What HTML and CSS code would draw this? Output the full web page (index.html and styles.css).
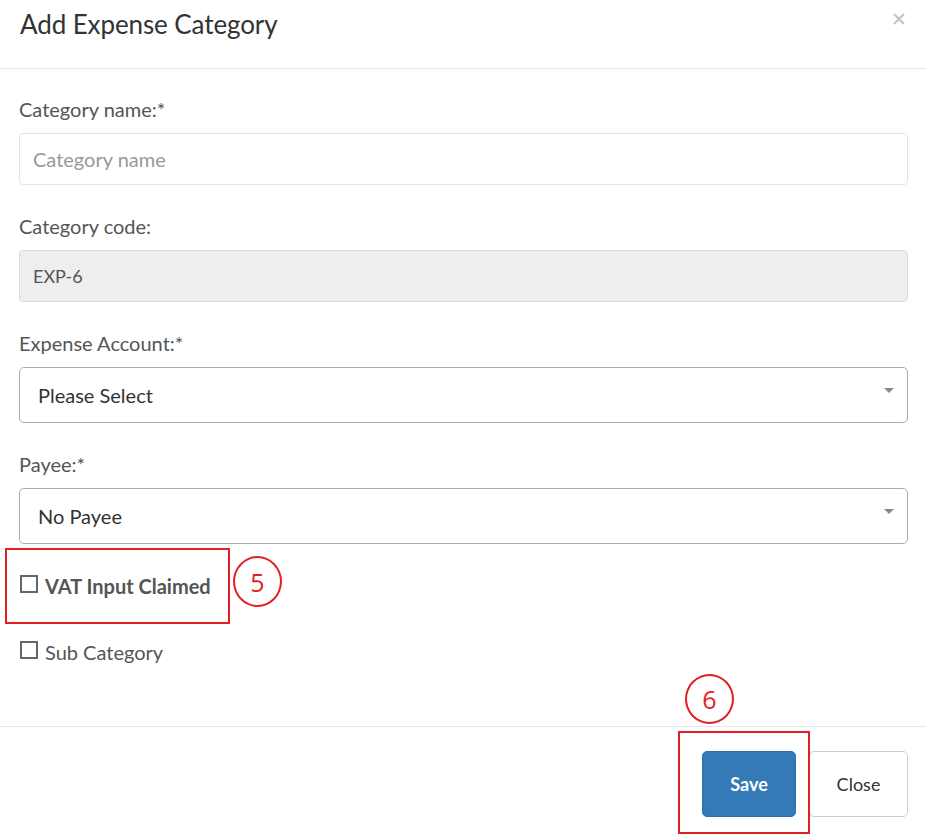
FILE: index.html
```html
<!DOCTYPE html>
<html>
<head>
<meta charset="utf-8">
<link rel="stylesheet" href="styles.css">
</head>
<body>
<div class="modal">
  <div class="modal-header">
    <h4 class="title">Add Expense Category</h4>
    <svg class="close-x" width="14" height="14" viewBox="0 0 14 14"><path d="M2 2 L12 12 M12 2 L2 12" stroke="#c4c4c4" stroke-width="2.2" fill="none"/></svg>
  </div>
  <div class="modal-body">
    <div class="group">
      <label class="label">Category name:*</label>
      <div class="input placeholder">Category name</div>
    </div>
    <div class="group">
      <label class="label">Category code:</label>
      <div class="input disabled">EXP-6</div>
    </div>
    <div class="group">
      <label class="label">Expense Account:*</label>
      <div class="select">Please Select<span class="arrow"></span></div>
    </div>
    <div class="group last">
      <label class="label">Payee:*</label>
      <div class="select">No Payee<span class="arrow"></span></div>
    </div>
    <div class="check-row vat">
      <span class="box"></span><span class="check-text bold">VAT Input Claimed</span>
      <span class="anno-box anno-vat"></span>
      <span class="anno-circle anno-5">5</span>
    </div>
    <div class="check-row sub">
      <span class="box"></span><span class="check-text">Sub Category</span>
    </div>
  </div>
  <div class="modal-footer">
    <button class="btn btn-primary">Save</button>
    <button class="btn btn-default">Close</button>
    <span class="anno-box anno-save"></span>
    <span class="anno-circle anno-6">6</span>
  </div>
</div>
</body>
</html>
```

FILE: styles.css
```css
* { box-sizing: border-box; }
html, body { margin: 0; padding: 0; background: #fff; }
body { font-family: "Lato", "Open Sans", sans-serif; color: #555; }
.modal { width: 926px; height: 835px; position: relative; overflow: hidden; }
.modal-header {
  height: 69px;
  border-bottom: 1px solid #e5e5e5;
  display: flex;
  align-items: flex-start;
  justify-content: space-between;
  padding: 9px 20px 0 20px;
}
.title { margin: 0; font-size: 26px; font-weight: 400; color: #333; line-height: 30px; letter-spacing: -0.1px; }
.close-x { margin-top: 3px; }
.modal-body { padding: 28px 18px 0 19px; height: 658px; border-bottom: 1px solid #e5e5e5; position: relative; }
.group { margin-bottom: 29px; }
.group.last { margin-bottom: 4px; }
.label { display: block; font-size: 20px; line-height: 24px; color: #555; margin-bottom: 12px; }
.input {
  height: 52px;
  border: 1px solid #e3e3e3;
  border-radius: 4px;
  padding: 0 13px;
  font-size: 20px;
  display: flex; align-items: center;
}
.placeholder { color: #999; }
.disabled { background: #eee; border-color: #ddd; color: #555; font-size: 18px; }
.select {
  position: relative;
  height: 56px;
  border: 1px solid #aaa;
  border-radius: 5px;
  padding: 0 18px;
  font-size: 20px;
  color: #333;
  display: flex; align-items: center;
}
.arrow {
  position: absolute; right: 13px; top: 20px;
  width: 0; height: 0;
  border-left: 5px solid transparent; border-right: 5px solid transparent;
  border-top: 5px solid #888;
}
.check-row { position: relative; display: flex; align-items: center; font-size: 20px; color: #555; }
.vat { height: 76px; }
.sub { height: 56px; }
.box { width: 18px; height: 18px; border: 2px solid #666; margin: 0 7px 0 1px; flex: none; position: relative; top: -2px; }
.check-text.bold { font-weight: 700; color: #555; }
.anno-box { position: absolute; border: 2px solid #e31e24; }
.anno-vat { left: -14px; top: 0; width: 225px; height: 76px; }
.anno-circle {
  position: absolute; border: 2px solid #e31e24; border-radius: 50%;
  color: #e31e24; font-size: 25px; display: flex; align-items: center; justify-content: center;
  font-family: "Open Sans", sans-serif;
}
.anno-5 { left: 214px; top: 8px; width: 49px; height: 51px; }
.modal-footer { position: relative; height: 109px; display: flex; justify-content: flex-end; align-items: flex-start; padding: 24px 18px 0 0; gap: 13px; }
.btn { height: 66px; border-radius: 5px; font-family: "Lato", sans-serif; font-size: 18px; padding: 0; }
.btn-primary { width: 94px; background: #337ab7; border: 1px solid #2e6da4; color: #fff; font-weight: 700; }
.btn-default { width: 99px; background: #fff; border: 1px solid #ccc; color: #333; }
.anno-save { left: 678px; top: 4px; width: 132px; height: 103px; }
.anno-6 { left: 685px; top: -53px; width: 49px; height: 50px; }
```
